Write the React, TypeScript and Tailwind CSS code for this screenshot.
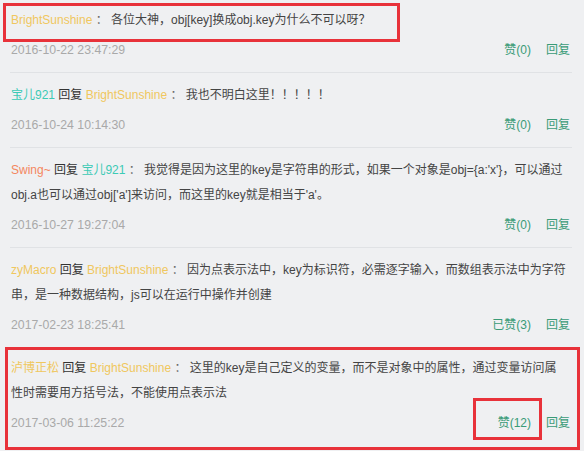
import React from "react";

const GOLD = "text-[#efc75e]";
const TEAL = "text-[#3ccab5]";
const SALMON = "text-[#f4875f]";

type Row = {
  user: { t: string; c: string };
  to?: { t: string; c: string };
  lines: string[];
  time: string;
  like: string;
};

const rows: Row[] = [
  {
    user: { t: "BrightSunshine", c: GOLD },
    lines: ["各位大神，obj[key]换成obj.key为什么不可以呀？"],
    time: "2016-10-22 23:47:29",
    like: "赞(0)",
  },
  {
    user: { t: "宝儿921", c: TEAL },
    to: { t: "BrightSunshine", c: GOLD },
    lines: ["我也不明白这里！！！！！"],
    time: "2016-10-24 10:14:30",
    like: "赞(0)",
  },
  {
    user: { t: "Swing~", c: SALMON },
    to: { t: "宝儿921", c: TEAL },
    lines: [
      "我觉得是因为这里的key是字符串的形式，如果一个对象是obj={a:'x'}，可以通过",
      "obj.a也可以通过obj['a']来访问，而这里的key就是相当于'a'。",
    ],
    time: "2016-10-27 19:27:04",
    like: "赞(0)",
  },
  {
    user: { t: "zyMacro", c: GOLD },
    to: { t: "BrightSunshine", c: GOLD },
    lines: [
      "因为点表示法中，key为标识符，必需逐字输入，而数组表示法中为字符",
      "串，是一种数据结构，js可以在运行中操作并创建",
    ],
    time: "2017-02-23 18:25:41",
    like: "已赞(3)",
  },
  {
    user: { t: "泸博正松", c: GOLD },
    to: { t: "BrightSunshine", c: GOLD },
    lines: [
      "这里的key是自己定义的变量，而不是对象中的属性，通过变量访问属",
      "性时需要用方括号法，不能使用点表示法",
    ],
    time: "2017-03-06 11:25:22",
    like: "赞(12)",
  },
];

export default function App() {
  return (
    <div
      className="relative w-[584px] h-[451px] overflow-hidden bg-[#eff0f2]"
      style={{ fontFamily: '"Liberation Sans", "Noto Sans CJK SC", sans-serif' }}
    >
      <div className="ml-[10px] w-[562px] text-[12px] leading-[25px]">
        {rows.map((r, i) => (
          <div
            key={i}
            className={
              i === 0
                ? "pt-[8px] pb-[9px]"
                : i === 4
                ? "border-t border-[#e0e2e5] pt-[8px] pb-[9px]"
                : "border-t border-[#e0e2e5] pt-[10px] pb-[9px]"
            }
          >
            <div className="text-[#444] whitespace-nowrap pl-px">
              {r.lines.map((ln, j) => (
                <div key={j}>
                  {j === 0 && (
                    <>
                      <span className={r.user.c}>{r.user.t}</span>
                      {r.to && (
                        <>
                          <span className="text-[#333]"> 回复 </span>
                          <span className={r.to.c}>{r.to.t}</span>
                        </>
                      )}
                      <span className="text-[#666]">  ：  </span>
                    </>
                  )}
                  <span>{ln}</span>
                </div>
              ))}
            </div>
            <div className="mt-[5px] flex items-center justify-between">
              <span className="text-[#a9a9a9] pl-px text-[12.3px]">{r.time}</span>
              <div className="flex gap-[15px] pr-[2px] text-[#3a9b77]">
                <span>{r.like}</span>
                <span>回复</span>
              </div>
            </div>
          </div>
        ))}
      </div>

      {/* annotation boxes */}
      <div className="absolute left-[3px] top-[3px] w-[397px] h-[39px] border-[3px] border-[#e8323a]" />
      <div className="absolute left-[5px] top-[347px] w-[575px] h-[103px] border-[3px] border-[#e8323a]" />
      <div className="absolute left-[473px] top-[398px] w-[69px] h-[42px] border-[3px] border-[#e8323a]" />
    </div>
  );
}
